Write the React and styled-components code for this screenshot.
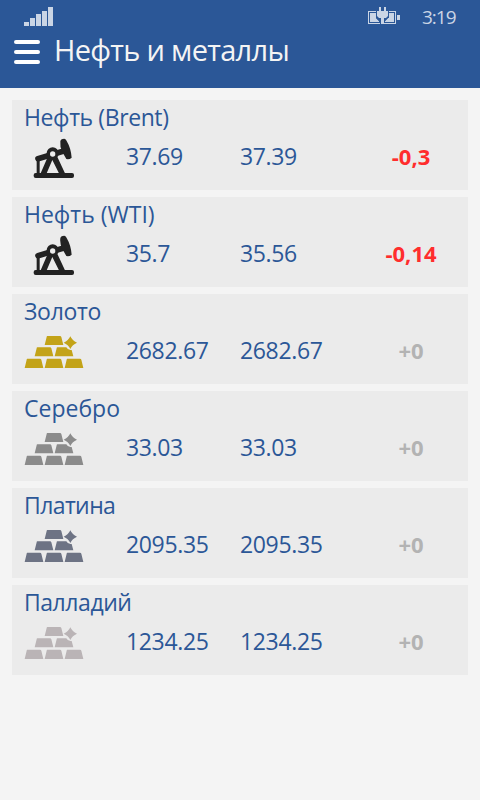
import React from "react";
import styled, { createGlobalStyle } from "styled-components";

const GlobalStyle = createGlobalStyle`
  * {
    box-sizing: border-box;
  }

  body {
    margin: 0;
    background: #f4f4f4;
    font-family: "Open Sans", "Noto Sans", sans-serif;
  }
`;

const Page = styled.div`
  width: 480px;
  min-height: 800px;
  background: #f4f4f4;
`;

const Header = styled.header`
  height: 88px;
  background: #2b5797;
`;

const StatusBar = styled.div`
  display: flex;
  height: 34px;
  padding: 7px 24px 0;
`;

const Battery = styled.svg`
  margin-left: auto;
`;

const Clock = styled.span`
  width: 34px;
  margin-left: 22px;
  color: #cad5e5;
  font-size: 19px;
  font-weight: 400;
  line-height: 20px;
  letter-spacing: -1px;
  white-space: nowrap;
`;

const TitleBar = styled.div`
  display: flex;
  height: 34px;
  padding-left: 14px;
`;

const MenuButton = styled.button`
  display: flex;
  flex-direction: column;
  justify-content: flex-start;
  gap: 6px;
  width: 26px;
  padding: 6px 0 0;
  border: 0;
  background: none;
`;

const MenuLine = styled.span`
  width: 26px;
  height: 4px;
  border-radius: 2px;
  background: #fff;
`;

const Title = styled.h1`
  margin: 0 0 0 14px;
  color: #f4f4f4;
  font-size: 29px;
  font-weight: 400;
  line-height: 32px;
  letter-spacing: -0.7px;
  white-space: nowrap;
`;

const List = styled.main`
  display: flex;
  flex-direction: column;
  gap: 7px;
  padding: 12px;
`;

const Card = styled.section`
  height: 90px;
  padding: 2px 0 0 12px;
  background: #ebebeb;
`;

const Name = styled.div`
  height: 32px;
  color: #2b5797;
  font-size: 23px;
  line-height: 30px;
  letter-spacing: ${(props) => props.$spacing || 0}px;
  white-space: nowrap;
`;

const Quote = styled.div`
  display: grid;
  grid-template-columns: 102px 114px 114px 114px;
  height: 46px;
`;

const Icon = styled.div`
  width: 62px;
  height: 46px;
`;

const Price = styled.span`
  color: #2b5797;
  font-size: 23px;
  line-height: 44px;
  letter-spacing: -0.35px;
`;

const Change = styled.span`
  color: ${(props) => (props.$down ? "#ff2d2d" : "#b3b3b3")};
  font-size: 22px;
  font-weight: 700;
  line-height: 44px;
  text-align: center;
`;

function Signal() {
  return (
    <svg width="30" height="20" fill="#cad5e5">
      <path d="M0 15h5v4H0zM6 11h5v8H6zM12 7h5v12h-5zM18 4h5v15h-5zM24 0h5v19h-5z" />
    </svg>
  );
}

function Charging() {
  return (
    <Battery width="33" height="18" fill="#cad5e5">
      <path d="M1 4h28v13H1zM2 5v11h26V5z" fillRule="evenodd" />
      <path d="M3 6h6v5l3 3v1H3zM27 6h-6v5l-3 3v1h9zM30 8h3v5h-3z" />
      <path d="M9 3h13v1H9zM9 4h13v7h-1l-3 3h-1v4h-4v-4h-1l-3-3z" fill="#2b5797" />
      <path d="M12 0h2v4h3V0h2v4h2v5l-2 2h-2v6h-3v-6h-2l-2-2V4h2z" />
    </Battery>
  );
}

function PumpJack() {
  return (
    <svg width="62" height="46" viewBox="12 12 186 138" fill="#222">
      <rect x="41" y="129" width="121" height="15" rx="6" />
      <path d="M50 90h9v42h-9zM61 132L86 74h23l27 58h-18L97 90 79 132z" />
      <path d="M54 86L134 62" stroke="#222" strokeWidth="17" strokeLinecap="round" />
      <path d="M121 34Q121 27 133 26Q138 27 140 33Q153 55 155 83Q148 89 139 87L127 66Q119 50 121 34z" />
      <circle cx="98" cy="70" r="18" />
      <circle cx="98" cy="72" r="8" fill="#ebebeb" />
    </svg>
  );
}

function Bars({ color }) {
  return (
    <svg width="62" height="46" viewBox="12 0 186 138" fill={color}>
      <path d="M82 24h38q3 0 4 3l6 24H74l6-24q0-3 2-3z" />
      <path d="M52 58h38q3 0 4 3l6 24H44l6-24q0-3 2-3zM112 58h27q5 10 16 8l5 19h-56l6-24q0-3 2-3z" />
      <path d="M22 92h38q3 0 4 3l6 25H14l6-25q0-3 2-3zM82 92h38q3 0 4 3l6 25H74l6-25q0-3 2-3zM142 92h38q3 0 4 3l6 25h-56l6-25q0-3 2-3z" />
      <path d="M151 25Q157 38 171 44Q157 50 151 63Q145 50 131 44Q145 38 151 25z" />
    </svg>
  );
}

const quotes = [
  { name: "Нефть (Brent)", spacing: -0.4, buy: "37.69", sell: "37.39", change: "-0,3" },
  { name: "Нефть (WTI)", buy: "35.7", sell: "35.56", change: "-0,14" },
  { name: "Золото", spacing: -0.3, buy: "2682.67", sell: "2682.67", change: "+0", color: "#c3a318" },
  { name: "Серебро", buy: "33.03", sell: "33.03", change: "+0", color: "#8b8b8b" },
  { name: "Платина", spacing: -0.6, buy: "2095.35", sell: "2095.35", change: "+0", color: "#6d7384" },
  { name: "Палладий", spacing: -0.45, buy: "1234.25", sell: "1234.25", change: "+0", color: "#bab4b6" },
];

export default function App() {
  return (
    <>
      <GlobalStyle />
      <Page>
        <Header>
          <StatusBar>
            <Signal />
            <Charging />
            <Clock>3:19</Clock>
          </StatusBar>
          <TitleBar>
            <MenuButton aria-label="Меню">
              <MenuLine />
              <MenuLine />
              <MenuLine />
            </MenuButton>
            <Title>Нефть и металлы</Title>
          </TitleBar>
        </Header>
        <List>
          {quotes.map(({ name, spacing, buy, sell, change, color }) => (
            <Card key={name}>
              <Name $spacing={spacing}>{name}</Name>
              <Quote>
                <Icon>{color ? <Bars color={color} /> : <PumpJack />}</Icon>
                <Price>{buy}</Price>
                <Price>{sell}</Price>
                <Change $down={change.startsWith("-")}>{change}</Change>
              </Quote>
            </Card>
          ))}
        </List>
      </Page>
    </>
  );
}
